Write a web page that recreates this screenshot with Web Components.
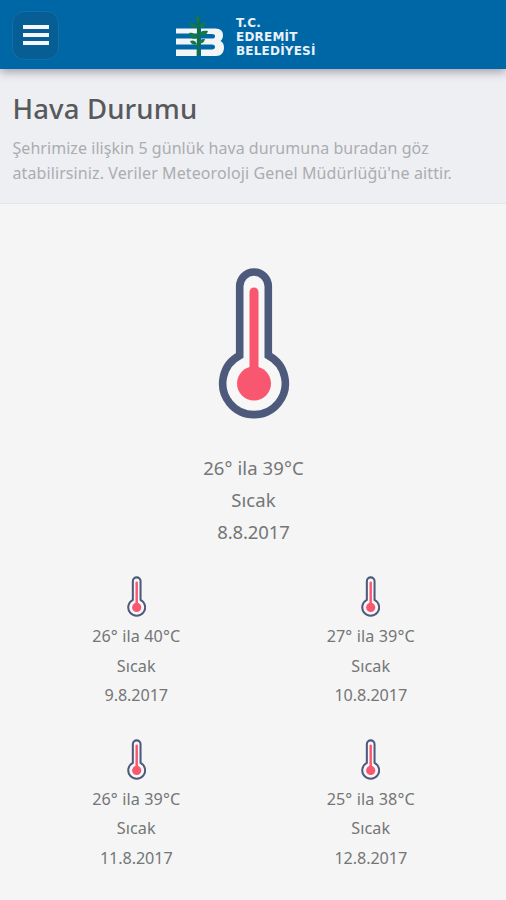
<!DOCTYPE html>
<html lang="tr">
<head>
<meta charset="utf-8">
<title>Hava Durumu</title>
<style>
    body {
        margin: 0;
        height: 900px;
        overflow: hidden;
        background: #f5f5f5;
        color: #747677;
        font-family: "Noto Sans", "Open Sans", sans-serif;
    }
</style>
</head>
<body>
<app-header></app-header>
<page-intro>
    <span slot="title">Hava Durumu</span>
    <span slot="line1">Şehrimize ilişkin 5 günlük hava durumuna buradan göz</span>
    <span slot="line2">atabilirsiniz. Veriler Meteoroloji Genel Müdürlüğü'ne aittir.</span>
</page-intro>
<weather-forecast>
    <weather-day slot="today" large temp="26° ila 39°C" state="Sıcak" date="8.8.2017"></weather-day>
    <weather-day temp="26° ila 40°C" state="Sıcak" date="9.8.2017"></weather-day>
    <weather-day temp="27° ila 39°C" state="Sıcak" date="10.8.2017"></weather-day>
    <weather-day temp="26° ila 39°C" state="Sıcak" date="11.8.2017"></weather-day>
    <weather-day temp="25° ila 38°C" state="Sıcak" date="12.8.2017"></weather-day>
</weather-forecast>

<script>
class MenuButton extends HTMLElement {
    constructor() {
        super();
        this.attachShadow({mode: 'open'}).innerHTML = `
            <style>
                :host { display: block; }
                button {
                    display: flex;
                    flex-direction: column;
                    align-items: center;
                    justify-content: center;
                    gap: 4px;
                    width: 47px;
                    height: 49px;
                    padding: 0 0 1px;
                    box-sizing: border-box;
                    border: 1px solid #1070a9;
                    border-radius: 12px;
                    background: #075e95;
                }
                i { width: 26px; height: 3.8px; background: #f4f6fb; }
            </style>
            <button aria-label="Menü"><i></i><i></i><i></i></button>
        `;
    }
}
customElements.define('menu-button', MenuButton);

class CityLogo extends HTMLElement {
    constructor() {
        super();
        this.attachShadow({mode: 'open'}).innerHTML = `
            <style>
                :host { display: flex; gap: 11px; }
                svg { display: block; }
                .name {
                    padding-top: 2px;
                    color: #e9f2f8;
                    font: bold 12px/14px "DejaVu Sans", sans-serif;
                    letter-spacing: .2px;
                    white-space: nowrap;
                }
            </style>
            <svg width="49" height="46" viewBox="0 0 49 46">
                <g fill="#f1f5f6">
                    <path d="M0 14.500h21v5H0zM0 24.500h21v6H0zM0 35.500h21v6.500H0z"/>
                    <path d="M25 14.500h14c6 0 8 3 8 6.500 0 3-1 5-2.500 6 2 1 3.500 3 3.500 6.500 0 5-3 8.500-8 8.500H25v-6.500h11c2 0 3-1 3-2.500s-1-2.500-3-2.500H25v-6h11c2 0 3-.8 3-2.300s-1-2.200-3-2.200H25z"/>
                </g>
                <path d="M22.500 4l-.5 38" stroke="#12703f" stroke-width="2.800"/>
                <g fill="#127a44">
                    <path d="M22 0c-3 4-2 7 0 9 2-2 2-5 0-9zM21 13c-3-5-6-4-8-4 1 4 5 6 8 4zM23 13c1-4 4-5 7-4-1 4-4 5-7 4zM21 24c-2-5-5-6-8-5 1 5 4 7 8 5zM23 21c1-4 4-5 9-4-1 4-5 6-9 4zM21 30c-2-4-4-4-7-3 1 3 4 5 7 3zM23 29c1-4 3-4 6-4-1 4-3 5-6 4z"/>
                </g>
            </svg>
            <div class="name">
                <div>T.C.</div>
                <div>EDREMİT</div>
                <div>BELEDİYESİ</div>
            </div>
        `;
    }
}
customElements.define('city-logo', CityLogo);

class AppHeader extends HTMLElement {
    constructor() {
        super();
        this.attachShadow({mode: 'open'}).innerHTML = `
            <style>
                :host {
                    display: flex;
                    position: relative;
                    z-index: 1;
                    box-sizing: border-box;
                    height: 69px;
                    padding: 11px 0 0 12px;
                    background: #0067a6;
                    box-shadow: 0 3px 9px rgba(40, 30, 50, .38);
                }
                city-logo { margin: 3px 0 0 117px; }
            </style>
            <menu-button></menu-button>
            <city-logo></city-logo>
        `;
    }
}
customElements.define('app-header', AppHeader);

class PageIntro extends HTMLElement {
    constructor() {
        super();
        this.attachShadow({mode: 'open'}).innerHTML = `
            <style>
                :host {
                    display: block;
                    box-sizing: border-box;
                    height: 135px;
                    padding: 21px 12.500px 0;
                    background: #eeeff3;
                    border-bottom: 1px solid #e5e6e8;
                }
                h1 {
                    margin: 0;
                    color: #58595b;
                    font-size: 27.500px;
                    font-weight: 500;
                    letter-spacing: .15px;
                    line-height: 38px;
                }
                p {
                    margin: 8px 0 0;
                    color: #abacb0;
                    font-size: 16px;
                    line-height: 24.500px;
                    white-space: nowrap;
                }
                p slot { display: block; letter-spacing: .05px; }
                slot[name="line2"] { letter-spacing: .1px; }
            </style>
            <h1><slot name="title"></slot></h1>
            <p><slot name="line1"></slot><slot name="line2"></slot></p>
        `;
    }
}
customElements.define('page-intro', PageIntro);

class ThermoIcon extends HTMLElement {
    constructor() {
        super();
        this.attachShadow({mode: 'open'}).innerHTML = `
            <style>
                :host { display: block; }
                svg { display: block; width: 100%; height: 100%; }
            </style>
            <svg viewBox="0 0 72 152">
                <path d="M21.700 88.500V19.300a14.300 14.300 0 0 1 28.600 0v69.200a31.300 31.300 0 1 1-28.600 0z" fill="#f7f7f7" stroke="#4d5a7c" stroke-width="7.600"/>
                <path d="M36 25v85" stroke="#f9566f" stroke-width="9" stroke-linecap="round"/>
                <circle cx="36" cy="116.500" r="17" fill="#f9566f"/>
            </svg>
        `;
    }
}
customElements.define('thermo-icon', ThermoIcon);

class WeatherDay extends HTMLElement {
    constructor() {
        super();
        this.attachShadow({mode: 'open'});
    }

    connectedCallback() {
        this.shadowRoot.innerHTML = `
            <style>
                :host {
                    display: flex;
                    flex-direction: column;
                    align-items: center;
                    font-size: 16.200px;
                    letter-spacing: .1px;
                    line-height: 29.500px;
                }
                thermo-icon { width: 19.400px; height: 41px; margin-bottom: 5px; }
                .date { letter-spacing: -.1px; }
                :host([large]) { font-size: 18.500px; line-height: 32px; }
                :host([large]) thermo-icon { width: 72px; height: 152px; margin-bottom: 33px; }
            </style>
            <thermo-icon></thermo-icon>
            <div class="temp">${this.getAttribute('temp')}</div>
            <div class="state">${this.getAttribute('state')}</div>
            <div class="date">${this.getAttribute('date')}</div>
        `;
    }
}
customElements.define('weather-day', WeatherDay);

class WeatherForecast extends HTMLElement {
    constructor() {
        super();
        this.attachShadow({mode: 'open'}).innerHTML = `
            <style>
                :host { display: block; padding: 63px 18px 0 19px; }
                .days {
                    display: grid;
                    grid-template-columns: 1fr 1fr;
                    row-gap: 28px;
                    margin-top: 28px;
                }
            </style>
            <slot name="today"></slot>
            <div class="days"><slot></slot></div>
        `;
    }
}
customElements.define('weather-forecast', WeatherForecast);
</script>
</body>
</html>
